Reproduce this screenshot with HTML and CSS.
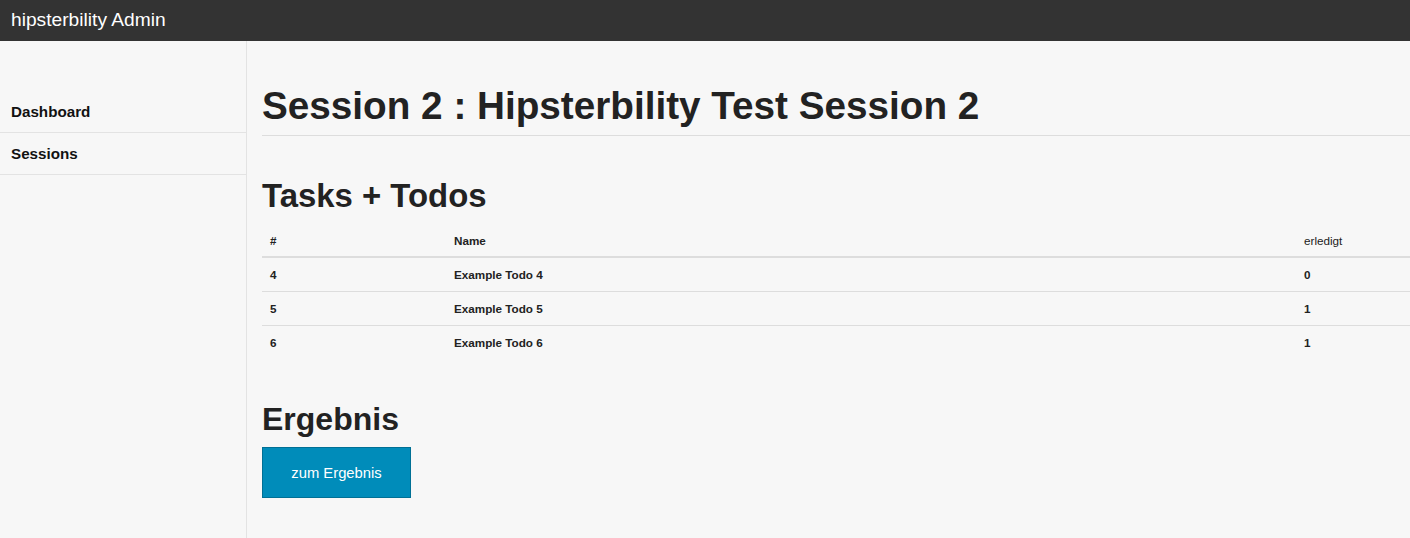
FILE: index.html
```html
<!DOCTYPE html>
<html lang="de">
<head>
<meta charset="utf-8">
<title>hipsterbility Admin</title>
<link rel="stylesheet" href="styles.css">
</head>
<body>
<header class="topbar">
  <span class="brand">hipsterbility Admin</span>
</header>
<div class="layout">
  <nav class="sidebar">
    <a class="nav-item" href="#">Dashboard</a>
    <a class="nav-item" href="#">Sessions</a>
  </nav>
  <main class="content">
    <h1 class="page-title">Session 2 : Hipsterbility Test Session 2</h1>
    <h2 class="section-title tasks-title">Tasks + Todos</h2>
    <table class="todos">
      <thead>
        <tr><th class="c-id">#</th><th class="c-name">Name</th><th class="c-done">erledigt</th></tr>
      </thead>
      <tbody>
        <tr><td>4</td><td>Example Todo 4</td><td>0</td></tr>
        <tr><td>5</td><td>Example Todo 5</td><td>1</td></tr>
        <tr><td>6</td><td>Example Todo 6</td><td>1</td></tr>
      </tbody>
    </table>
    <h2 class="section-title result-title">Ergebnis</h2>
    <a class="button" href="#">zum Ergebnis</a>
  </main>
</div>
</body>
</html>
```
FILE: styles.css
```css
* { box-sizing: border-box; }
html, body { margin: 0; padding: 0; }
body {
  background: #f7f7f7;
  color: #222;
  font-family: "Liberation Sans", Arial, Helvetica, sans-serif;
  height: 538px;
  overflow: hidden;
}
.topbar {
  height: 41px;
  background: #333;
  display: flex;
  align-items: center;
  padding-left: 11px;
  padding-bottom: 2px;
}
.brand {
  color: #fff;
  font-size: 19.2px;
}
.layout {
  display: flex;
  height: 497px;
}
.sidebar {
  width: 247px;
  flex: none;
  border-right: 1px solid #e3e3e3;
  padding-top: 50px;
  display: flex;
  flex-direction: column;
}
.nav-item {
  display: flex;
  align-items: center;
  height: 42px;
  padding-left: 11px;
  border-bottom: 1px solid #e3e3e3;
  color: #111;
  font-weight: bold;
  font-size: 15.2px;
  text-decoration: none;
}
.content {
  flex: 1;
  padding-left: 15px;
  min-width: 0;
}
.page-title {
  margin: 41px 0 0;
  font-size: 38.7px;
  line-height: 48px;
  font-weight: bold;
  padding-bottom: 5px;
  border-bottom: 1px solid #ddd;
  white-space: nowrap;
}
.section-title {
  margin: 41px 0 9px;
  font-size: 32px;
  line-height: 38px;
  font-weight: bold;
}
.tasks-title { font-size: 32.9px; }
.result-title { margin-top: 41px; }
.todos {
  width: 1148px;
  border-collapse: collapse;
  font-size: 11.7px;
}
.todos th, .todos td {
  text-align: left;
  padding: 0 8px;
  height: 33px;
  font-weight: bold;
}
.todos tbody td { height: 34px; }
.todos thead th {
  border-bottom: 2px solid #ddd;
}
.todos tbody tr + tr td {
  border-top: 1px solid #ddd;
}
.todos th.c-done { font-weight: normal; }
.c-id { width: 184px; }
.c-name { width: 850px; }
.button {
  display: inline-flex;
  align-items: center;
  justify-content: center;
  width: 149px;
  height: 51px;
  background: #008cba;
  border: 1px solid #007095;
  color: #fff;
  font-size: 14.8px;
  text-decoration: none;
}
```
